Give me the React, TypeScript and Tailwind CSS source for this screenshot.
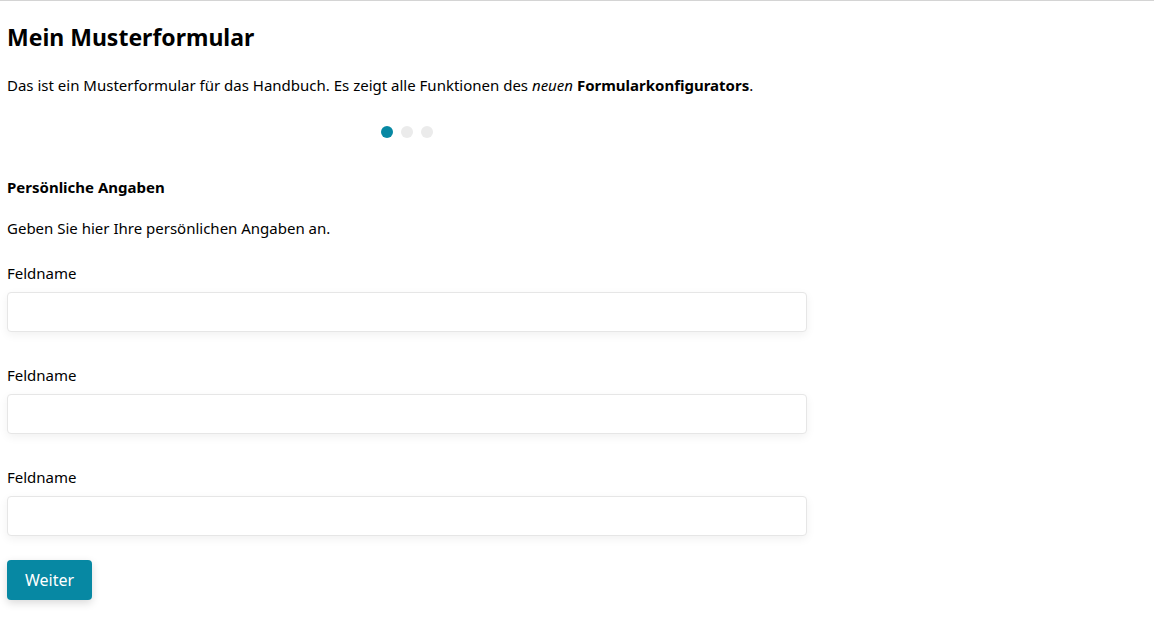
const fields = ["Feldname", "Feldname", "Feldname"];

function Steps() {
  return (
    <div className="flex justify-center gap-2 w-[800px] h-3">
      <span className="w-3 h-3 rounded-full bg-[#0788a3]" />
      <span className="w-3 h-3 rounded-full bg-[#ebebeb]" />
      <span className="w-3 h-3 rounded-full bg-[#ebebeb]" />
    </div>
  );
}

function Field({ label }: { label: string }) {
  return (
    <div className="flex flex-col">
      <label className="text-[15px] leading-[22px] text-black">{label}</label>
      <input
        type="text"
        className="mt-2 h-10 w-[800px] rounded border border-[#e6e6e6] bg-white px-3 shadow-[0_3px_10px_rgba(0,0,0,0.06)] outline-none"
      />
    </div>
  );
}

export default function App() {
  return (
    <div
      className="min-h-screen bg-white border-t border-[#d4d4d4] text-black"
      style={{ fontFamily: '"Noto Sans", "Open Sans", sans-serif' }}
    >
      <div className="pl-[7px] pt-[21px]">
        <h1 className="text-[23px] leading-[30px] font-bold">Mein Musterformular</h1>
        <p className="mt-[22px] text-[15px] leading-[22px]">
          Das ist ein Musterformular für das Handbuch. Es zeigt alle Funktionen des{" "}
          <em>neuen</em> <strong>Formularkonfigurators</strong>.
        </p>
        <div className="mt-[30px]">
          <Steps />
        </div>
        <h2 className="mt-[38px] text-[15px] leading-[22px] font-bold">Persönliche Angaben</h2>
        <p className="mt-[19px] text-[15px] leading-[22px]">
          Geben Sie hier Ihre persönlichen Angaben an.
        </p>
        <div className="mt-[23px] flex flex-col gap-8">
          {fields.map((f, i) => (
            <Field key={i} label={f} />
          ))}
        </div>
        <button className="mt-6 h-10 w-[85px] rounded bg-[#0788a3] text-white text-[16px] shadow-[0_3px_8px_rgba(0,0,0,0.15)]">
          Weiter
        </button>
      </div>
    </div>
  );
}
